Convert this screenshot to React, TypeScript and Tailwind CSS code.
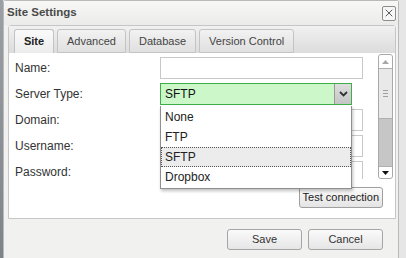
import { X } from "lucide-react";

const font = { fontFamily: '"Liberation Sans", Arial, sans-serif' };

const labels = ["Name:", "Server Type:", "Domain:", "Username:", "Password:"];
const options = ["None", "FTP", "SFTP", "Dropbox"];

const Field = ({ children }: { children?: React.ReactNode }) => (
  <div className="h-[22px] w-[203px] border border-[#c9c9c9] bg-white">{children}</div>
);

const App = () => {
  return (
    <div className="flex h-[258px] w-[406px] overflow-hidden bg-[#e6e6e6] text-[#333]" style={font}>
      <div className="w-[3px] shrink-0 bg-gradient-to-b from-[#9aa0a6] to-[#7d8388]" />
      <div className="flex w-[396px] shrink-0 flex-col rounded-t-[3px] border-x border-t border-[#b9b9b9] bg-[#f1f1ef]">
        {/* title bar */}
        <div className="flex h-[24px] items-center justify-between bg-gradient-to-b from-[#f7f7f6] to-[#ebebe9] pl-[3px] pr-[2px]">
          <span className="text-[11.5px] font-bold text-[#4a4a4a]">Site Settings</span>
          <button className="flex h-[15px] w-[14px] items-center justify-center rounded-[2px] border border-[#8d8d8d] bg-[#f6f6f6]">
            <X size={12} strokeWidth={1.6} className="text-[#333]" />
          </button>
        </div>

        {/* tabs panel */}
        <div className="ml-[4px] mr-[2px] rounded-t-[3px] border border-[#c6c6c6] bg-white">
          <div className="flex h-[27px] items-end gap-[3px] bg-gradient-to-b from-[#f1f1f1] to-[#dcdcdc] pl-[5px]">
            <div className="flex h-[24px] w-[40px] items-center justify-center rounded-t-[3px] border border-b-0 border-[#c3c3c3] bg-gradient-to-b from-[#fafafa] to-[#ececec] text-[11px] font-bold text-[#222]">
              Site
            </div>
            {["Advanced", "Database", "Version Control"].map((t) => (
              <div
                key={t}
                className="flex h-[24px] items-center rounded-t-[3px] border border-[#c3c3c3] bg-gradient-to-b from-[#f2f2f2] to-[#e0e0e0] px-[9px] text-[11px] text-[#444]"
              >
                {t}
              </div>
            ))}
          </div>

          <div className="relative flex h-[165px] flex-col">
            <div className="flex h-[126px] overflow-hidden">
              <div className="flex flex-1 flex-col gap-[4px] pt-[4px]">
                {labels.map((l, i) => (
                  <div key={l} className="flex h-[22px] shrink-0 items-center">
                    <span className="w-[151px] shrink-0 pl-[6px] text-[12px] text-[#333]">{l}</span>
                    {i === 1 ? (
                      <div className="flex h-[22px] w-[192px] border border-[#3fae49] bg-[#ccf8c9]">
                        <span className="flex flex-1 items-center pl-[4px] text-[12px] text-[#111]">SFTP</span>
                        <div className="flex w-[17px] items-center justify-center border-l border-[#9a9a9a] bg-gradient-to-b from-[#dedede] to-[#c5c5c5]">
                          <svg width="9" height="6" viewBox="0 0 9 6">
                            <path d="M1 1 L4.5 4.5 L8 1" stroke="#333" strokeWidth="1.8" fill="none" />
                          </svg>
                        </div>
                      </div>
                    ) : (
                      <Field />
                    )}
                  </div>
                ))}
              </div>
              {/* scrollbar */}
              <div className="mr-[2px] mt-[1px] flex h-[125px] w-[15px] flex-col overflow-hidden rounded-[3px] border border-[#a9a9a9] bg-[#c6c6c6]">
                <div className="flex h-[13px] items-center justify-center bg-white">
                  <svg width="7" height="4" viewBox="0 0 7 4">
                    <path d="M0 4 L3.5 0 L7 4 Z" fill="#a8a8a8" />
                  </svg>
                </div>
                <div className="flex h-[51px] flex-col items-center justify-center gap-[2px] border-y border-[#b0b0b0] bg-[#e9e9e9]">
                  <div className="h-px w-[5px] bg-[#a0a0a0]" />
                  <div className="h-px w-[5px] bg-[#a0a0a0]" />
                  <div className="h-px w-[5px] bg-[#a0a0a0]" />
                </div>
                <div className="flex-1" />
                <div className="flex h-[12px] items-center justify-center border-t border-[#b0b0b0] bg-white">
                  <svg width="7" height="4" viewBox="0 0 7 4">
                    <path d="M0 0 L3.5 4 L7 0 Z" fill="#111" />
                  </svg>
                </div>
              </div>
            </div>
            <div className="flex justify-end pr-[12px] pt-[8px]">
              <button className="h-[21px] rounded-[3px] border border-[#9f9f9f] bg-gradient-to-b from-[#fbfbfb] to-[#e4e4e4] px-[3px] text-[11px] text-[#222]">
                Test connection
              </button>
            </div>

            {/* open dropdown list */}
            <div className="absolute left-[151px] top-[53px] flex w-[192px] flex-col border border-t-0 border-[#8f8f8f] bg-white py-px shadow-[1px_2px_3px_rgba(0,0,0,0.25)]">
              {options.map((o) => (
                <div
                  key={o}
                  className={
                    o === "SFTP"
                      ? "flex h-[20px] items-center border border-dotted border-[#555] bg-[#ececec] pl-[3px] text-[12px] text-[#222]"
                      : "flex h-[20px] items-center pl-[4px] text-[12px] text-[#222]"
                  }
                >
                  {o}
                </div>
              ))}
            </div>
          </div>
        </div>

        {/* footer */}
        <div className="flex justify-end gap-[6px] pr-[15px] pt-[10px]">
          <button className="h-[21px] w-[75px] rounded-[3px] border border-[#a5a5a5] bg-gradient-to-b from-[#fafafa] to-[#e6e6e6] text-[11px] text-[#333]">
            Save
          </button>
          <button className="h-[21px] w-[75px] rounded-[3px] border border-[#a5a5a5] bg-gradient-to-b from-[#fafafa] to-[#e6e6e6] text-[11px] text-[#333]">
            Cancel
          </button>
        </div>
      </div>
    </div>
  );
};

export default App;
